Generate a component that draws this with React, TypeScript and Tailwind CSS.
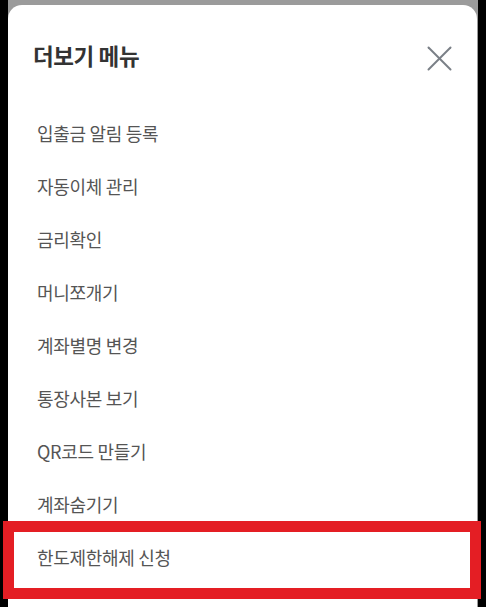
const items = [
  '입출금 알림 등록',
  '자동이체 관리',
  '금리확인',
  '머니쪼개기',
  '계좌별명 변경',
  '통장사본 보기',
  'QR코드 만들기',
  '계좌숨기기',
  '한도제한해제 신청',
];

export default function App() {
  return (
    <div
      className="relative w-[486px] h-[607px] overflow-hidden bg-black flex"
      style={{ fontFamily: '"Noto Sans CJK KR", "Noto Sans", sans-serif' }}
    >
      <div className="ml-[8px] w-[470px] h-full bg-[#9b9b9b] pt-[5px]">
        <div className="h-full w-[469px] bg-white rounded-t-[14px] flex flex-col">
          {/* 헤더 */}
          <div className="h-[102px] flex items-center justify-between pl-[25px] pr-[25px] shrink-0">
            <h1 className="text-[22.5px] font-bold text-[#333333] tracking-[-0.4px]">더보기 메뉴</h1>
            <button className="text-[#7a7f86] mt-[4px]">
              <svg width="25" height="25" viewBox="0 0 25 25" fill="none" stroke="currentColor" strokeWidth="2" strokeLinecap="round">
                <line x1="1.5" y1="1.5" x2="23.5" y2="23.5" />
                <line x1="23.5" y1="1.5" x2="1.5" y2="23.5" />
              </svg>
            </button>
          </div>

          {/* 메뉴 목록 */}
          <ul className="flex flex-col">
            {items.map((label) => (
              <li
                key={label}
                className="h-[53px] flex items-center pl-[29px] text-[18px] text-[#555555] tracking-[-0.3px]"
              >
                {label}
              </li>
            ))}
          </ul>
        </div>
      </div>

      {/* 강조 표시 */}
      <div className="absolute left-[3px] top-[521px] w-[478px] h-[78px] border-[11px] border-[#e41e24]" />
    </div>
  );
}
